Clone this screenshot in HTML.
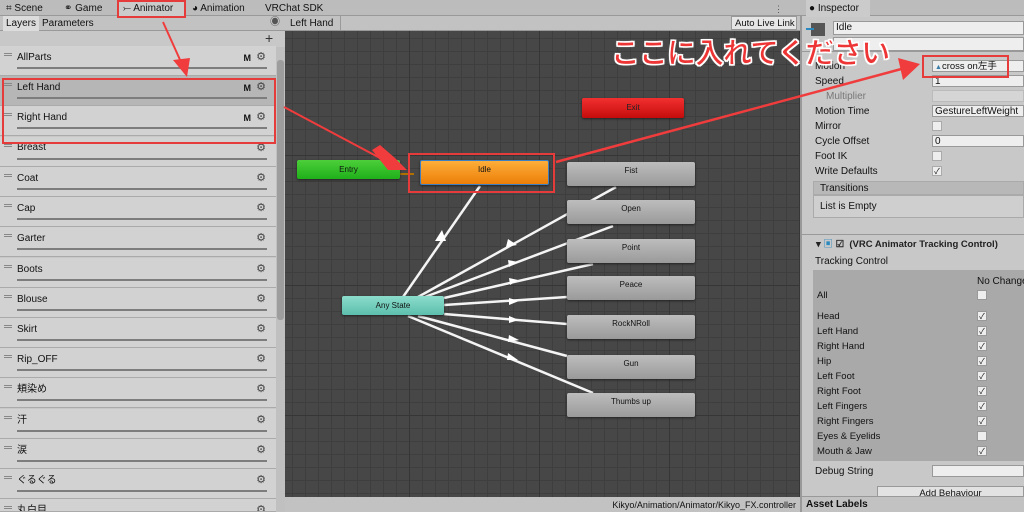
<!DOCTYPE html>
<html style="width:1024px;height:512px;overflow:hidden"><head><meta charset="utf-8"><style>
*{margin:0;padding:0;box-sizing:border-box}
body{width:1024px;height:512px;overflow:hidden;position:relative;background:#c8c8c8;font-family:"Liberation Sans","Noto Sans CJK JP",sans-serif;font-size:10px;color:#111;line-height:12px}
.a{position:absolute;white-space:nowrap}
.row{position:absolute;left:0;width:276px;height:30px;border-bottom:1px solid #aaa;background:#d2d2d2;overflow:hidden}
.row .t{position:absolute;left:17px;top:6px;font-size:10px;line-height:12px}
.row .ln{position:absolute;left:17px;right:9px;top:21px;height:2px;background:#7d7d7d}
.row .h{position:absolute;left:4px;top:7px;width:8px;height:3px;border-top:1px solid #888;border-bottom:1px solid #888}
.row .g{position:absolute;right:10px;top:5px;font-size:11px;color:#444;line-height:12px}
.row .m{position:absolute;right:25px;top:6px;font-size:9px;font-weight:bold}
.lab{position:absolute;left:815px;font-size:10px;white-space:nowrap}
.fld{position:absolute;left:932px;width:92px;height:12px;background:#eee;border:1px solid #999;font-size:10px;padding-left:2px;line-height:11px;white-space:nowrap;overflow:hidden}
.cb{position:absolute;left:932px;width:10px;height:10px;background:#eee;border:1px solid #aaa;font-size:8px;line-height:9px;text-align:center}
.node{position:absolute;border-radius:2px;font-size:8px;text-align:center;box-shadow:0 1px 2px #222;white-space:nowrap}
.gr{background:linear-gradient(#bdbdbd,#9a9a9a);color:#111;width:128px;height:24px;left:567px;line-height:18px}
.tc{position:absolute;left:817px;font-size:9.5px;white-space:nowrap}
.tcb{position:absolute;left:977px;width:10px;height:10px;background:#eee;border:1px solid #999;font-size:8px;line-height:9px;text-align:center}
</style></head><body>
<!-- top bar -->
<div class="a" style="left:0;top:0;width:1024px;height:16px;background:#bcbcbc;border-bottom:1px solid #999"></div>
<div class="a" style="left:6px;top:3px;font-size:10px">⌗ Scene</div>
<div class="a" style="left:64px;top:3px;font-size:10px">⚭ Game</div>
<div class="a" style="left:117px;top:0;width:69px;height:17px;background:#cbcbcb"></div>
<div class="a" style="left:123px;top:3px;font-size:10px">⤚ Animator</div>
<div class="a" style="left:192px;top:3px;font-size:10px">◕ Animation</div>
<div class="a" style="left:265px;top:3px;font-size:10px">VRChat SDK</div>
<div class="a" style="left:774px;top:3px;font-size:9px;color:#555">⋮</div>
<div class="a" style="left:806px;top:0;width:64px;height:17px;background:#cbcbcb"></div>
<div class="a" style="left:809px;top:3px;font-size:10px">● Inspector</div>
<!-- second row -->
<div class="a" style="left:0;top:16px;width:285px;height:15px;background:#c2c2c2;border-bottom:1px solid #999"></div>
<div class="a" style="left:3px;top:16px;width:36px;height:15px;background:#dcdcdc;font-size:10px;padding:2px 0 0 3px">Layers</div>
<div class="a" style="left:42px;top:18px;font-size:10px">Parameters</div>
<div class="a" style="left:270px;top:17px;font-size:10px;color:#555">◉</div>
<div class="a" style="left:285px;top:16px;width:516px;height:15px;background:#c2c2c2;border-bottom:1px solid #999"></div>
<div class="a" style="left:290px;top:18px;font-size:10px">Left Hand</div>
<div class="a" style="left:340px;top:16px;width:1px;height:15px;background:#999"></div>
<div class="a" style="left:731px;top:16px;width:66px;height:14px;background:#e6e6e6;border:1px solid #999;font-size:9.5px;padding:1px 0 0 3px">Auto Live Link</div>
<!-- left panel -->
<div class="a" style="left:0;top:31px;width:285px;height:481px;background:#c8c8c8"></div>
<div class="a" style="left:265px;top:30px;font-size:14px;color:#333;line-height:16px">+</div>
<div class="a" style="left:0;top:46px;width:276px;height:1px;background:#999"></div>
<div class="row" style="top:46px"><div class="h"></div><div class="t">AllParts</div><div class="m">M</div><div class="g">⚙</div><div class="ln"></div></div>
<div class="row" style="top:76px;background:#b6b6b6"><div class="h"></div><div class="t">Left Hand</div><div class="m">M</div><div class="g">⚙</div><div class="ln"></div></div>
<div class="row" style="top:106px"><div class="h"></div><div class="t">Right Hand</div><div class="m">M</div><div class="g">⚙</div><div class="ln"></div></div>
<div class="row" style="top:137px"><div class="h"></div><div class="t" style="top:5px">Breast</div><div class="g">⚙</div><div class="ln"></div></div>
<div class="row" style="top:167px"><div class="h"></div><div class="t">Coat</div><div class="g">⚙</div><div class="ln"></div></div>
<div class="row" style="top:197px"><div class="h"></div><div class="t">Cap</div><div class="g">⚙</div><div class="ln"></div></div>
<div class="row" style="top:227px"><div class="h"></div><div class="t">Garter</div><div class="g">⚙</div><div class="ln"></div></div>
<div class="row" style="top:258px"><div class="h"></div><div class="t">Boots</div><div class="g">⚙</div><div class="ln"></div></div>
<div class="row" style="top:288px"><div class="h"></div><div class="t">Blouse</div><div class="g">⚙</div><div class="ln"></div></div>
<div class="row" style="top:318px"><div class="h"></div><div class="t">Skirt</div><div class="g">⚙</div><div class="ln"></div></div>
<div class="row" style="top:348px"><div class="h"></div><div class="t">Rip_OFF</div><div class="g">⚙</div><div class="ln"></div></div>
<div class="row" style="top:378px"><div class="h"></div><div class="t">頬染め</div><div class="g">⚙</div><div class="ln"></div></div>
<div class="row" style="top:409px"><div class="h"></div><div class="t">汗</div><div class="g">⚙</div><div class="ln"></div></div>
<div class="row" style="top:439px"><div class="h"></div><div class="t">涙</div><div class="g">⚙</div><div class="ln"></div></div>
<div class="row" style="top:469px"><div class="h"></div><div class="t">ぐるぐる</div><div class="g">⚙</div><div class="ln"></div></div>
<div class="row" style="top:499px;height:13px"><div class="h"></div><div class="t">丸白目</div><div class="g">⚙</div></div>
<div class="a" style="left:276px;top:47px;width:9px;height:465px;background:#c0c0c0"></div>
<div class="a" style="left:277px;top:60px;width:7px;height:260px;background:#9d9d9d;border-radius:3px"></div>
<!-- graph -->
<div class="a" style="left:285px;top:31px;width:516px;height:466px;background-color:#474747;background-image:linear-gradient(#363636 1px,transparent 1px),linear-gradient(90deg,#363636 1px,transparent 1px),linear-gradient(#3e3e3e 1px,transparent 1px),linear-gradient(90deg,#3e3e3e 1px,transparent 1px);background-size:130px 130px,130px 130px,13px 13px,13px 13px;background-position:-6px -6px"></div>
<svg class="a" style="left:0;top:0" width="1024" height="512">
<g stroke="#f4f4f4" stroke-width="2.5" fill="#fff">
<line x1="403" y1="297" x2="480" y2="186"/>
<line x1="418" y1="297" x2="616" y2="187"/>
<line x1="425" y1="297" x2="613" y2="226"/>
<line x1="444" y1="298" x2="593" y2="264"/>
<line x1="444" y1="305" x2="567" y2="297"/>
<line x1="444" y1="314" x2="567" y2="324"/>
<line x1="418" y1="316" x2="567" y2="356"/>
<line x1="408" y1="316" x2="593" y2="393"/>
</g>
<g fill="#fff">
<polygon points="435,241 446,241 442,230"/>
<polygon points="508,239 517,245 506,247"/>
<polygon points="508,260 518,262 509,267"/>
<polygon points="509,278 518,280 510,285"/>
<polygon points="509,298 519,301 509,305"/>
<polygon points="509,316 519,320 509,323"/>
<polygon points="509,335 519,340 508,342"/>
<polygon points="508,353 518,360 507,360"/>
</g>
<line x1="400" y1="174" x2="414" y2="174" stroke="#b07000" stroke-width="2"/>
</svg>
<div class="node" style="left:297px;top:160px;width:103px;height:19px;background:linear-gradient(#4ccf3a,#1fb01a);line-height:19px">Entry</div>
<div class="node" style="left:420px;top:160px;width:129px;height:25px;background:linear-gradient(#fdae3a,#ec7e08);line-height:18px;border:1px solid #3d7fc0">Idle</div>
<div class="node" style="left:582px;top:98px;width:102px;height:20px;background:linear-gradient(#f23030,#c50c0c);line-height:20px;color:#222">Exit</div>
<div class="node" style="left:342px;top:296px;width:102px;height:19px;background:linear-gradient(#8cdccb,#5cbfad);line-height:19px">Any State</div>
<div class="node gr" style="top:162px">Fist</div>
<div class="node gr" style="top:200px">Open</div>
<div class="node gr" style="top:239px">Point</div>
<div class="node gr" style="top:276px">Peace</div>
<div class="node gr" style="top:315px">RockNRoll</div>
<div class="node gr" style="top:355px">Gun</div>
<div class="node gr" style="top:393px">Thumbs up</div>
<div class="a" style="left:285px;top:497px;width:516px;height:15px;background:#c2c2c2;font-size:9px;text-align:right;padding:2px 5px 0 0">Kikyo/Animation/Animator/Kikyo_FX.controller</div>
<div class="a" style="left:800px;top:16px;width:2px;height:496px;background:#999"></div>
<!-- inspector -->
<div class="a" style="left:811px;top:23px;width:14px;height:13px;background:#555"></div>
<div class="a" style="left:806px;top:28px;width:8px;height:2px;background:#2a8ac0"></div>
<div class="a" style="left:833px;top:21px;width:191px;height:14px;background:#eee;border:1px solid #999;font-size:10px;padding-left:2px">Idle</div>
<div class="a" style="left:833px;top:37px;width:191px;height:14px;background:#eee;border:1px solid #999"></div>
<div class="a" style="left:802px;top:51px;width:222px;height:1px;background:#999"></div>
<div class="lab" style="top:61px">Motion</div>
<div class="fld" style="top:60px;font-size:9.5px"><span style="color:#3a7ca8;font-size:7px">▲</span>cross on左手</div>
<div class="lab" style="top:76px">Speed</div><div class="fld" style="top:75px">1</div>
<div class="lab" style="top:91px;left:826px;color:#777">Multiplier</div><div class="fld" style="top:90px;background:#d5d5d5;border-color:#bbb"></div>
<div class="lab" style="top:106px">Motion Time</div><div class="fld" style="top:105px">GestureLeftWeight</div>
<div class="lab" style="top:121px">Mirror</div><div class="cb" style="top:121px"></div>
<div class="lab" style="top:136px">Cycle Offset</div><div class="fld" style="top:135px">0</div>
<div class="lab" style="top:151px">Foot IK</div><div class="cb" style="top:151px"></div>
<div class="lab" style="top:166px">Write Defaults</div><div class="cb" style="top:166px">✓</div>
<div class="a" style="left:813px;top:181px;width:211px;height:14px;background:#b8b8b8;border:1px solid #aaa;font-size:10px;padding:1px 0 0 6px">Transitions</div>
<div class="a" style="left:813px;top:195px;width:211px;height:23px;background:#cfcfcf;border:1px solid #aaa;font-size:10px;padding:5px 0 0 6px">List is Empty</div>
<div class="a" style="left:802px;top:234px;width:222px;height:1px;background:#999"></div>
<div class="a" style="left:816px;top:239px;font-size:9.5px;font-weight:bold;color:#222">▾ <span style="color:#2a8ac0">▣</span> ☑ &nbsp;(VRC Animator Tracking Control)</div>
<div class="a" style="left:815px;top:256px;font-size:10px">Tracking Control</div>
<div class="a" style="left:813px;top:270px;width:211px;height:191px;background:#a9a9a9"></div>
<div class="a" style="left:977px;top:276px;font-size:10px">No Change</div>
<div class="tc" style="top:290px">All</div><div class="tcb" style="top:290px"></div>
<div class="tc" style="top:311px">Head</div><div class="tcb" style="top:311px">✓</div>
<div class="tc" style="top:326px">Left Hand</div><div class="tcb" style="top:326px">✓</div>
<div class="tc" style="top:341px">Right Hand</div><div class="tcb" style="top:341px">✓</div>
<div class="tc" style="top:356px">Hip</div><div class="tcb" style="top:356px">✓</div>
<div class="tc" style="top:371px">Left Foot</div><div class="tcb" style="top:371px">✓</div>
<div class="tc" style="top:386px">Right Foot</div><div class="tcb" style="top:386px">✓</div>
<div class="tc" style="top:401px">Left Fingers</div><div class="tcb" style="top:401px">✓</div>
<div class="tc" style="top:416px">Right Fingers</div><div class="tcb" style="top:416px">✓</div>
<div class="tc" style="top:431px">Eyes &amp; Eyelids</div><div class="tcb" style="top:431px"></div>
<div class="tc" style="top:446px">Mouth &amp; Jaw</div><div class="tcb" style="top:446px">✓</div>
<div class="lab" style="top:466px">Debug String</div><div class="fld" style="top:465px"></div>
<div class="a" style="left:877px;top:486px;width:147px;height:12px;background:#e2e2e2;border:1px solid #999;font-size:9.5px;text-align:center;overflow:hidden;line-height:14px">Add Behaviour</div>
<div class="a" style="left:802px;top:496px;width:222px;height:16px;background:#c2c2c2;border-top:1px solid #999;font-size:10px;font-weight:bold;padding:2px 0 0 4px">Asset Labels</div>
<!-- annotations -->
<div class="a" style="left:117px;top:0;width:69px;height:18px;border:2px solid #e53b3b"></div>
<div class="a" style="left:2px;top:78px;width:274px;height:66px;border:2px solid #e53b3b"></div>
<div class="a" style="left:408px;top:153px;width:147px;height:40px;border:2px solid #e53b3b"></div>
<div class="a" style="left:922px;top:55px;width:87px;height:23px;border:2px solid #e53b3b"></div>
<svg class="a" style="left:0;top:0" width="1024" height="512">
<g fill="#f03c3c" stroke="#f03c3c">
<line x1="163" y1="22" x2="181" y2="62" stroke-width="2"/>
<polygon points="173,60 190,58 187,77" stroke="none"/>
<line x1="284" y1="107" x2="380" y2="158" stroke-width="2"/>
<polygon points="372,150 388,170 407,170 395,158 380,145" stroke="none"/>
<line x1="556" y1="162" x2="905" y2="68" stroke-width="2.5"/>
<polygon points="898,58 920,64 903,80" stroke="none"/>
</g>
</svg>
<div class="a" style="left:611px;top:33px;font-size:29px;line-height:36px;font-weight:bold;color:#ee3535;letter-spacing:-1px;font-family:'Noto Sans CJK JP',sans-serif;-webkit-text-stroke:1px #fff;text-shadow:0 0 2px #fff,1px 1px 0 #fff,-1px -1px 0 #fff,1px -1px 0 #fff,-1px 1px 0 #fff">ここに入れてください</div>
</body></html>
